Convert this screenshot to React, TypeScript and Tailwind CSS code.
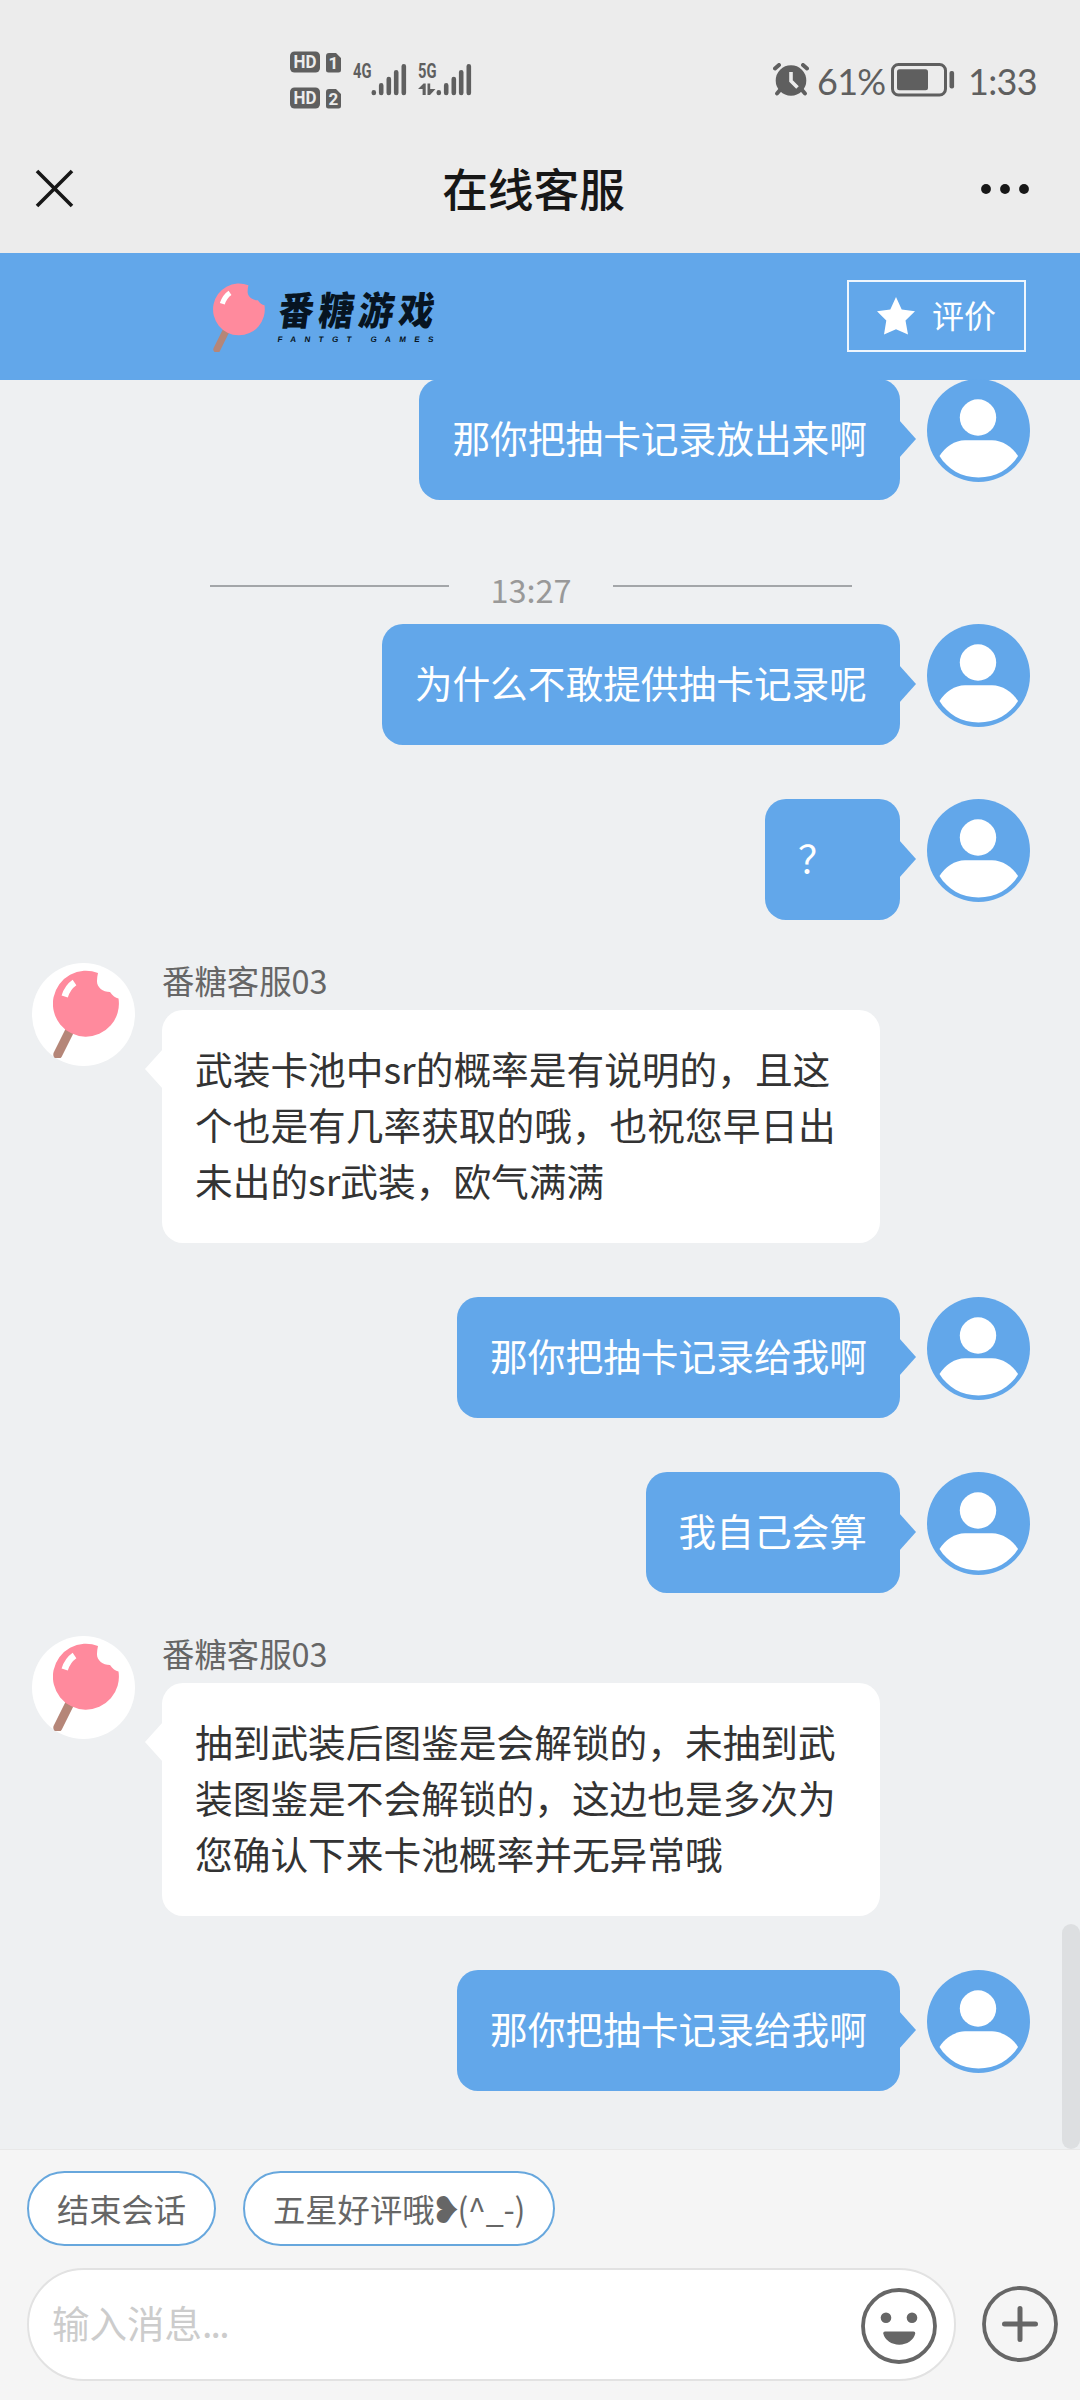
const messages = [
  { id: 1, from: "me", lines: ["那你把抽卡记录放出来啊"] },
  { id: 2, from: "time", lines: ["13:27"] },
  { id: 3, from: "me", lines: ["为什么不敢提供抽卡记录呢"] },
  { id: 4, from: "me", lines: ["？"] },
  { id: 5, from: "agent", lines: ["武装卡池中sr的概率是有说明的，且这", "个也是有几率获取的哦，也祝您早日出", "未出的sr武装，欧气满满"] },
  { id: 6, from: "me", lines: ["那你把抽卡记录给我啊"] },
  { id: 7, from: "me", lines: ["我自己会算"] },
  { id: 8, from: "agent", lines: ["抽到武装后图鉴是会解锁的，未抽到武", "装图鉴是不会解锁的，这边也是多次为", "您确认下来卡池概率并无异常哦"] },
  { id: 9, from: "me", lines: ["那你把抽卡记录给我啊"] },
]

function HdBadge({ sim }: { sim: string }) {
  return (
    <svg width="52" height="22" viewBox="0 0 52 22" className="block overflow-visible">
      <rect x="0" y="0.5" width="30" height="21" rx="4.5" fill="#5f5f5f" />
      <text x="15" y="17.4" textAnchor="middle" fontSize="18" fontWeight="700" fill="#ececec" textLength="23" lengthAdjust="spacingAndGlyphs" className="font-['Roboto',sans-serif]">HD</text>
      <path d="M39 2h7l5 5v12a2.5 2.5 0 0 1-2.5 2.5h-10A2.5 2.5 0 0 1 36 19V5a3 3 0 0 1 3-3z" fill="#5f5f5f" />
      <text x="43.3" y="18" textAnchor="middle" fontSize="17" fontWeight="700" fill="#ececec" className="font-['Roboto',sans-serif]">{sim}</text>
    </svg>
  )
}

function Signal({ label, arrows }: { label: string; arrows?: boolean }) {
  return (
    <svg width="54" height="36" viewBox="0 0 54 36" className="block overflow-visible">
      <text x="0" y="17" fontSize="21" fontWeight="700" fill="#5f5f5f" textLength="18.5" lengthAdjust="spacingAndGlyphs" className="font-['Roboto',sans-serif]">{label}</text>
      <g stroke="#5f5f5f" strokeWidth="4.6" strokeLinecap="round">
        <path d="M20.8 31.4v.6M28.2 24.4v7.6M35.8 18v14M43.2 11.2v20.8M50.8 5.2v26.8" />
      </g>
      {arrows && (
        <path d="M0 28L5.500 22.500h2.200V34H4.600v-6zM9.500 22.500h2.700v5.500H17.500L12 34H9.500z" fill="#5f5f5f" />
      )}
    </svg>
  )
}

function AlarmIcon() {
  return (
    <svg width="36" height="34" viewBox="0 0 36 34" className="block">
      <circle cx="18" cy="17.5" r="15.3" fill="#5f5f5f" />
      <path d="M2 5.5L6 2M34 5.5L30 2" stroke="#5f5f5f" strokeWidth="4" strokeLinecap="round" />
      <path d="M7 27l-3 3.5M29 27l3 3.5" stroke="#5f5f5f" strokeWidth="4" strokeLinecap="round" />
      <path d="M18 9v9l6.5 6.5" stroke="#ececec" strokeWidth="3.6" fill="none" />
    </svg>
  )
}

function BatteryIcon() {
  return (
    <svg width="64" height="34" viewBox="0 0 64 34" className="block">
      <rect x="1.5" y="1.5" width="53" height="30.5" rx="6" fill="none" stroke="#5f5f5f" strokeWidth="3" />
      <rect x="6" y="6.3" width="31" height="21" rx="2.5" fill="#5f5f5f" />
      <rect x="58.5" y="8" width="4.6" height="17.5" rx="2" fill="#5f5f5f" />
    </svg>
  )
}

function Candy({ className }: { className: string }) {
  return (
    <svg viewBox="0 0 66 88" className={className}>
      <path d="M17 60L4.800 84.500" stroke="#b58678" strokeWidth="9" strokeLinecap="round" />
      <path d="M45 3A33 33 0 1 0 65.500 28.500C62.500 28 59.500 25.500 57 22 49.500 22 43.500 17 44 10.500c.1-2.500.4-5 1-7.500z" fill="#ff8a9d" />
      <path d="M21.500 12.500c-5 3.500-8 8-9.800 14" stroke="#fff" strokeWidth="6.500" fill="none" />
    </svg>
  )
}

function UserAvatar() {
  return (
    <svg viewBox="0 0 103 103" className="block size-[103px] shrink-0">
      <circle cx="51.500" cy="51.500" r="51.500" fill="#62a7ea" />
      <circle cx="51" cy="38.500" r="18.200" fill="#fff" />
      <path d="M12.500 77C18 68 28 61.300 38 61.300h27C75 61.300 85.500 68 91 77 83 90 68.500 98.500 51.500 98.500S20.500 90 12.500 77z" fill="#fff" />
    </svg>
  )
}

function MyMessage({ lines }: { lines: string[] }) {
  return (
    <div className="flex items-start justify-end pr-[50px] mb-[54px]">
      <div className="relative min-w-[135px] h-[121px] mr-[27px] rounded-[21px] bg-[#62a7ea] px-[33px] pt-[30px]">
        {lines.map(line => (
          <p key={line} className="text-white text-[37.700px] leading-[56px] whitespace-nowrap">{line}</p>
        ))}
        <svg width="17" height="38" viewBox="0 0 17 38" className="absolute left-full -ml-px top-[41px]">
          <path d="M0 0L17 19L0 38z" fill="#62a7ea" />
        </svg>
      </div>
      <UserAvatar />
    </div>
  )
}

function AgentMessage({ lines }: { lines: string[] }) {
  return (
    <div className="flex items-start pl-8 -mt-[11px] mb-[54px]">
      <div className="size-[103px] shrink-0 rounded-full bg-white pl-[21px] pt-[7px]">
        <Candy className="block w-[66px] h-[88px]" />
      </div>
      <div className="ml-[27px]">
        <p className="h-[47px] text-[#666] text-[32.400px] leading-[33px] whitespace-nowrap">番糖客服03</p>
        <div className="relative w-[718px] h-[233px] rounded-[21px] bg-white px-[33px] pt-[30px]">
          {lines.map(line => (
            <p key={line} className="text-[#333] text-[37.700px] leading-[56px] whitespace-nowrap">{line}</p>
          ))}
          <svg width="18" height="40" viewBox="0 0 18 40" className="absolute right-full -mr-px top-[39px]">
            <path d="M18 0L0 20L18 40z" fill="#fff" />
          </svg>
        </div>
      </div>
    </div>
  )
}

function TimeDivider({ text }: { text: string }) {
  return (
    <div className="flex items-center h-[32px] ml-[210px] w-[642px] mt-[74px] mb-[18px]">
      <div className="flex-1 h-[2px] bg-[#a3a6a9] mb-2" />
      <span className="w-[164px] -mt-[3px] text-center text-[#999] text-[32.500px] leading-8">{text}</span>
      <div className="flex-1 h-[2px] bg-[#a3a6a9] mb-2" />
    </div>
  )
}

export default function App() {
  return (
    <div className="w-[1080px] h-[2400px] flex flex-col overflow-hidden bg-[#eef0f2] font-['Noto_Sans_CJK_SC',sans-serif]">

      {/* Status bar */}
      <div className="h-[126px] shrink-0 flex items-start bg-[#ececec] pl-[290px]">
        <div className="flex flex-col gap-[14px] pt-[51px]">
          <HdBadge sim="1" />
          <HdBadge sim="2" />
        </div>
        <div className="flex gap-[11px] pl-[11px] pt-[61px]">
          <Signal label="4G" />
          <Signal label="5G" arrows />
        </div>
        <div className="flex items-center ml-[301px] mt-[63px] h-[34px] text-[#5f5f5f] text-[36px] tracking-[-0.700px] font-['Lato',sans-serif]">
          <AlarmIcon />
          <span className="w-[74px] ml-2 pt-[2px]">61%</span>
          <BatteryIcon />
          <span className="ml-[13px] pt-[2px]">1:33</span>
        </div>
      </div>

      {/* Title bar */}
      <div className="h-[127px] shrink-0 flex items-center justify-between bg-[#ececec] pl-[35px] pr-[50px]">
        <svg width="39" height="39" viewBox="0 0 39 39" className="-mt-[3px]">
          <path d="M2 2l35 35M37 2L2 37" stroke="#171717" strokeWidth="3.6" />
        </svg>
        <h1 className="text-[#171717] text-[45.700px] leading-[60px] font-medium ml-[13px] -mt-[5px]">在线客服</h1>
        <svg width="50" height="12" viewBox="0 0 50 12" className="-mt-[2px]">
          <circle cx="6" cy="6" r="4.9" fill="#171717" />
          <circle cx="25" cy="6" r="4.9" fill="#171717" />
          <circle cx="44" cy="6" r="4.9" fill="#171717" />
        </svg>
      </div>

      {/* Brand header */}
      <div className="h-[127px] shrink-0 flex items-start justify-between bg-[#62a7ea] pl-[213px] pr-[54px]">
        <div className="flex items-start">
          <Candy className="block w-[52px] h-[69px] mt-[30px]" />
          <svg width="170" height="60" viewBox="0 0 170 60" className="ml-[10px] mt-[33px] overflow-visible">
            <g transform="skewX(-8)" fill="#071421">
              <text transform="scale(.9 1)" x="8" y="39" fontSize="39" fontWeight="900" textLength="173" className="font-['Noto_Sans_CJK_SC',sans-serif]">番糖游戏</text>
              <text x="10" y="56" fontSize="8" fontWeight="700" textLength="156" className="font-['Liberation_Sans',sans-serif]">FANTGT GAMES</text>
            </g>
          </svg>
        </div>
        <button className="w-[179px] h-[72px] mt-[27px] flex items-center border-2 border-white/90 pl-7 text-white">
          <svg width="38" height="38" viewBox="0 0 38 38">
            <path d="M19 0l5.700 12.600L38 14.200l-9.500 9.400L31 37.500l-12-5.300-12 5.300 2.300-13.900L0 14.200l13.300-1.600z" fill="#fff" />
          </svg>
          <span className="ml-[17px] -mt-1 text-[32px] leading-10">评价</span>
        </button>
      </div>

      {/* Messages */}
      <div className="relative flex-1 min-h-0 overflow-hidden -mt-px">
        {messages.map(m => {
          if (m.from === "time") return <TimeDivider key={m.id} text={m.lines[0]} />
          if (m.from === "agent") return <AgentMessage key={m.id} lines={m.lines} />
          return <MyMessage key={m.id} lines={m.lines} />
        })}
        <div className="absolute right-0 bottom-0 w-[18px] h-[225px] rounded-full bg-[#dddfe1]" />
      </div>

      {/* Footer */}
      <div className="h-[251px] shrink-0 border-t border-[#e8e8e8] bg-[#f5f5f5] pt-[21px]">
        <div className="flex gap-[27px] pl-[27px] text-[#666] text-[32.300px]">
          <button className="w-[189px] h-[75px] rounded-full border-2 border-[#67a7dd] bg-white whitespace-nowrap">结束会话</button>
          <button className="w-[312px] h-[75px] rounded-full border-2 border-[#67a7dd] bg-white flex items-center pl-7 whitespace-nowrap">
            <span>五星好评哦</span>
            <span className="w-[23px] mt-1 flex justify-center font-['DejaVu_Sans',sans-serif] text-[37px] leading-10">❥</span>
            <span className="tracking-[-0.300px]">(^_-)</span>
          </button>
        </div>
        <div className="flex items-center mt-[22px] pl-[27px]">
          <div className="w-[929px] h-[113px] flex items-center justify-between rounded-full border-2 border-[#e2e2e2] bg-white pl-[23px] pr-[17px]">
            <span className="text-[#ccc] text-[37.500px] -mt-1">输入消息<span className="tracking-[-1.800px]">...</span></span>
            <svg width="76" height="76" viewBox="0 0 76 76" className="mt-[2px]">
              <circle cx="38" cy="38" r="36" fill="none" stroke="#666" strokeWidth="3.800" />
              <circle cx="25" cy="29.700" r="5.300" fill="#666" />
              <circle cx="51" cy="29.700" r="5.300" fill="#666" />
              <path d="M24 43.500h28.500q2 0 1.700 2A16.200 13.500 0 0 1 22.300 45.500q-.3-2 1.700-2z" fill="#666" />
            </svg>
          </div>
          <svg width="76" height="76" viewBox="0 0 76 76" className="ml-[26px] -mt-[2px]">
            <circle cx="38" cy="38" r="36" fill="none" stroke="#666" strokeWidth="3.800" />
            <path d="M38 22.500v31M22.500 38h31" stroke="#666" strokeWidth="5" strokeLinecap="round" />
          </svg>
        </div>
      </div>
    </div>
  )
}
